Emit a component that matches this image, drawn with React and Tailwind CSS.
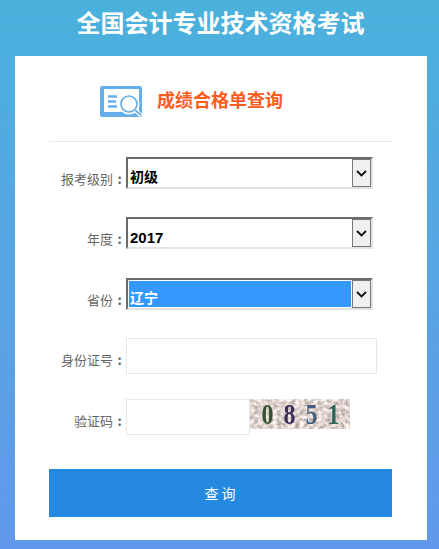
import React from 'react';

const CJK = 'font-["Noto_Sans_CJK_SC","Liberation_Sans",sans-serif]';

// looks like a native windows select, so drawn by hand instead of <select>
const FakeSelect = ({ value, selected, textClass }) => (
  <div className="flex h-[32px] w-[247px] border-2 border-t-[#6b6b6b] border-l-[#6b6b6b] border-r-[#e3e3e3] border-b-[#e3e3e3] bg-white">
    <div className="flex flex-1 p-px">
      <div className={`flex flex-1 items-center pl-[1px] font-bold leading-none ${selected ? 'bg-[#3399ff] text-white' : 'text-black'} ${textClass}`}>
        {value}
      </div>
    </div>
    <div className="flex h-[28px] w-[19px] items-center justify-center border border-[#777777] bg-[#f0f0f0]">
      <svg width="11" height="7" viewBox="0 0 11 7" fill="none" stroke="#111" strokeWidth="1.8">
        <path d="M1 1l4.5 4.5L10 1" />
      </svg>
    </div>
  </div>
);

const Row = ({ label, className, children }) => (
  <div className={`flex ${className}`}>
    <label className="flex w-[77px] shrink-0 justify-end whitespace-nowrap pt-[13px] text-[13px] leading-[18px] text-[#666666]">
      {label}
      <span className="w-[13px] text-center font-bold">:</span>
    </label>
    {children}
  </div>
);

const Captcha = () => (
  <div className="relative flex h-[30px] w-[100px] items-center gap-[7px] pl-[10px] font-['Liberation_Serif',serif] text-[30px] font-bold leading-[30px]">
    <svg className="absolute inset-0" width="100" height="30">
      <filter id="noise" x="0" y="0" width="100%" height="100%" colorInterpolationFilters="sRGB">
        <feTurbulence type="fractalNoise" baseFrequency="0.22 0.3" numOctaves="4" seed="7" />
        <feColorMatrix values="0.5 0.45 0 0 0.4  0.45 0.45 0 0 0.38  0.4 0.45 0.05 0 0.36  0 0 0 0 1" />
        <feGaussianBlur stdDeviation="0.5" />
      </filter>
      <rect width="100" height="30" filter="url(#noise)" />
    </svg>
    <span className="relative scale-x-[0.8] text-[#33502f] blur-[0.5px]">0</span>
    <span className="relative scale-x-[0.8] text-[#3c2c5e] blur-[0.5px]">8</span>
    <span className="relative scale-x-[0.8] text-[#45607f] blur-[0.5px]">5</span>
    <span className="relative scale-x-[0.8] text-[#2f6659] blur-[0.5px]">1</span>
  </div>
);

export default function App() {
  return (
    <div className={`h-[549px] w-[439px] overflow-hidden bg-gradient-to-b from-[#4ab1dc] to-[#6298eb] ${CJK}`}>
      <h1 className="h-[56px] pl-[2px] pt-[3px] text-center text-[24px] font-bold leading-[38px] text-white">
        全国会计专业技术资格考试
      </h1>

      <div className="ml-[15px] h-[484px] w-[412px] bg-white px-[34px]">
        <div className="flex h-[86px] items-start border-b border-[#e8e8e8] pl-[51px] pt-[30px]">
          <svg width="42" height="31" viewBox="0 0 42 31" fill="none">
            <rect width="42" height="31" rx="2" fill="#66aeea" />
            <rect x="4" y="3" width="35" height="23" fill="#fff" />
            <circle cx="29" cy="18" r="10.500" fill="#fff" />
            <circle cx="29" cy="18" r="8" fill="#fff" stroke="#66aeea" strokeWidth="1.700" />
            <path d="M35 24l6 5.500" stroke="#fff" strokeWidth="4" />
            <path d="M35 24l6 5" stroke="#66aeea" strokeWidth="1.700" />
            <path d="M8 10.500h9M8 15.500h8M8 20.500h9" stroke="#66aeea" strokeWidth="2.600" />
          </svg>
          <h2 className="ml-[15px] text-[18px] font-bold leading-[26px] text-[#fc5c1c]">成绩合格单查询</h2>
        </div>

        <Row label="报考级别" className="mt-[15px]">
          <FakeSelect value="初级" textClass="pt-[6px] text-[14px]" />
        </Row>
        <Row label="年度" className="mt-[28px]">
          <FakeSelect value="2017" textClass="pt-[8px] text-[15px] font-['Liberation_Sans',sans-serif]" />
        </Row>
        <Row label="省份" className="mt-[29px]">
          <FakeSelect value="辽宁" selected textClass="pt-[6px] text-[14px]" />
        </Row>
        <Row label="身份证号" className="mt-[28px]">
          <input className="h-[36px] w-[251px] border border-[#e8e8e8] outline-none" />
        </Row>
        <Row label="验证码" className="mt-[25px]">
          <input className="h-[36px] w-[124px] border border-[#e8e8e8] outline-none" />
          <Captcha />
        </Row>

        <button className="mt-[34px] flex h-[48px] w-[343px] items-center justify-center bg-[#2589e0] pl-[2px] text-[14px] tracking-[3px] text-white">
          查询
        </button>
      </div>
    </div>
  );
}
